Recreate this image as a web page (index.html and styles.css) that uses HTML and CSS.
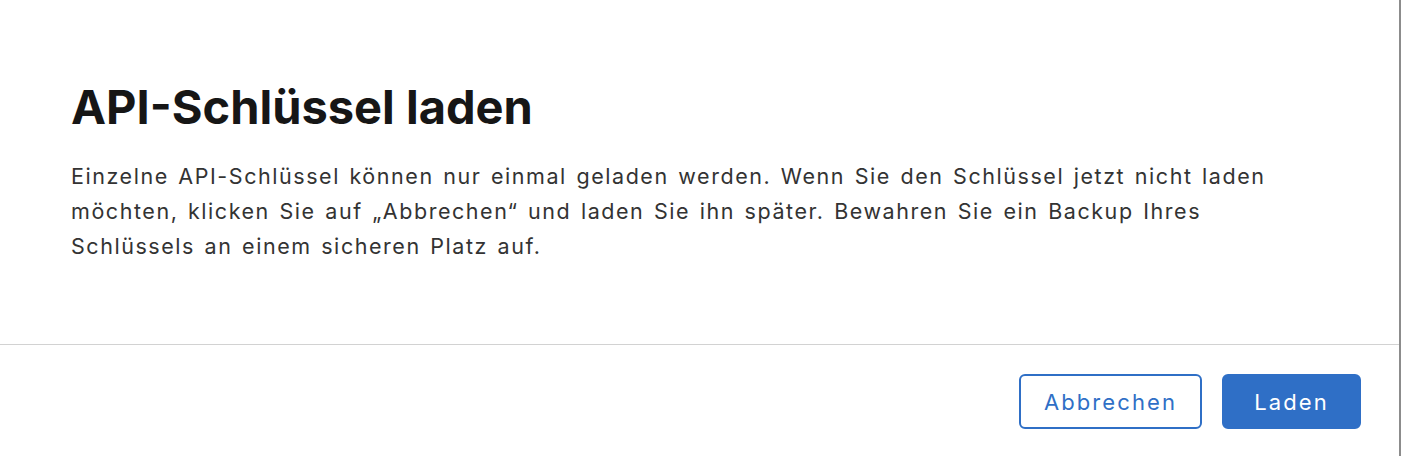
FILE: index.html
```html
<!DOCTYPE html>
<html lang="de">
<head>
<meta charset="utf-8">
<link rel="stylesheet" href="styles.css">
</head>
<body>
<div class="dialog">
  <div class="content">
    <h1 class="title">API-Schlüssel laden</h1>
    <p class="text">Einzelne API-Schlüssel können nur einmal geladen werden. Wenn Sie den Schlüssel jetzt nicht laden möchten, klicken Sie auf „Abbrechen“ und laden Sie ihn später. Bewahren Sie ein Backup Ihres Schlüssels an einem sicheren Platz auf.</p>
  </div>
  <div class="footer">
    <button class="btn btn-secondary">Abbrechen</button>
    <button class="btn btn-primary">Laden</button>
  </div>
</div>
</body>
</html>
```

FILE: styles.css
```css
html, body {
  margin: 0;
  padding: 0;
  background: #ffffff;
  height: 456px;
  overflow: hidden;
}
body {
  font-family: Inter, "Noto Sans", sans-serif;
}
.dialog {
  width: 1401px;
  height: 470px;
  box-sizing: border-box;
  border-right: 2px solid #8c8c8c;
  border-bottom: 2px solid #8c8c8c;
  border-bottom-right-radius: 12px;
  background: #fff;
}
.content {
  padding: 78px 40px 0 71px;
  height: 345px;
  box-sizing: border-box;
  border-bottom: 1px solid #d2d2d2;
}
.title {
  margin: 0;
  font-size: 47px;
  font-weight: 700;
  color: #161616;
  line-height: 58px;
  letter-spacing: 0;
}
.text {
  margin: 23px 0 0 0;
  font-size: 21.5px;
  line-height: 35px;
  color: #333333;
  letter-spacing: 1.55px;
  word-spacing: 2px;
  max-width: 1240px;
}
.footer {
  display: flex;
  justify-content: flex-end;
  gap: 20px;
  padding: 29px 38px 0 0;
}
.btn {
  font-family: Inter, "Noto Sans", sans-serif;
  font-size: 22px;
  letter-spacing: 2.1px;
  height: 55px;
  border-radius: 6px;
  box-sizing: border-box;
  cursor: pointer;
  padding: 0;
}
.btn-secondary {
  width: 183px;
  background: #fff;
  color: #2f6fc6;
  border: 2px solid #2f6fc6;
}
.btn-primary {
  width: 139px;
  background: #2f6fc6;
  color: #fff;
  border: 2px solid #2f6fc6;
}
```
